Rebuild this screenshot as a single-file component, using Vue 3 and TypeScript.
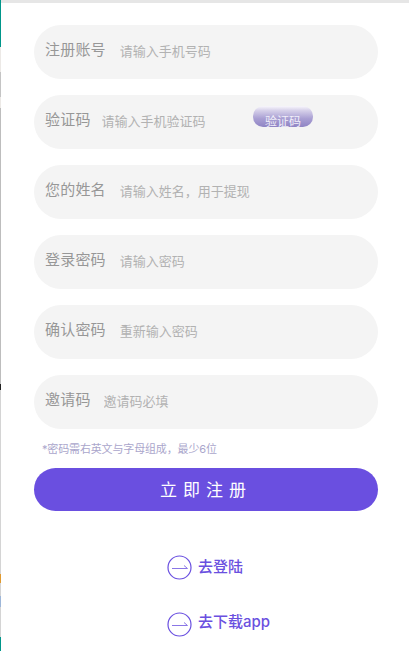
<script setup lang="ts">
interface Field {
  label: string
  placeholder: string
  gap: number
  code?: boolean
}
const fields: Field[] = [
  { label: '注册账号', placeholder: '请输入手机号码', gap: 14 },
  { label: '验证码', placeholder: '请输入手机验证码', gap: 11, code: true },
  { label: '您的姓名', placeholder: '请输入姓名，用于提现', gap: 14 },
  { label: '登录密码', placeholder: '请输入密码', gap: 14 },
  { label: '确认密码', placeholder: '重新输入密码', gap: 14 },
  { label: '邀请码', placeholder: '邀请码必填', gap: 13 },
]
const links = ['去登陆', '去下载app']
</script>

<template>
  <div class="page">
    <div class="top-edge"></div>
    <div class="left-edge"></div>
    <form class="form" @submit.prevent>
      <label v-for="f in fields" :key="f.label" class="field">
        <span class="label">{{ f.label }}</span>
        <input class="input" :placeholder="f.placeholder" :style="{ marginLeft: f.gap + 'px' }" />
        <button v-if="f.code" type="button" class="code-btn">验证码</button>
      </label>
      <p class="hint">*密码需右英文与字母组成，最少6位</p>
      <button type="submit" class="submit">立即注册</button>
    </form>
    <nav class="links">
      <a v-for="l in links" :key="l" class="link">
        <svg class="arrow" width="25" height="25" viewBox="0 0 25 25" fill="none">
          <circle cx="12.5" cy="12.5" r="11.5" stroke="#6a50e0" stroke-width="1.2" />
          <path d="M5 13.5H20.5M17 10.5L20.5 13.5" stroke="#8a76e6" stroke-width="1" />
        </svg>
        <span class="link-text">{{ l }}</span>
      </a>
    </nav>
  </div>
</template>

<style>
html, body { margin: 0; background: #fff; }
</style>

<style scoped>
.page {
  position: relative;
  width: 409px;
  height: 651px;
  overflow: hidden;
  background: #fff;
  font-family: Inter, "Noto Sans CJK SC", sans-serif;
}
.top-edge {
  position: absolute;
  top: 0;
  left: 0;
  right: 0;
  height: 3px;
  background: #e6e6e6;
}
.left-edge {
  position: absolute;
  top: 0;
  left: 0;
  width: 1px;
  height: 651px;
  background: linear-gradient(to bottom,
    #00968a 0 47px, #ece9e6 47px 72px, #c4c4c4 72px 97px, #ece9e6 97px 108px,
    #bdbdbd 108px 384px, #222 384px 390px, #d4d4d4 390px 574px, #e09a30 574px 583px,
    #d4d4d4 583px 596px, #9db6d8 596px 607px, #d4d4d4 607px 637px, #00968a 637px 651px);
}
.form {
  display: flex;
  flex-direction: column;
  gap: 16px;
  padding: 25px 31px 0 34px;
}
.field {
  display: flex;
  align-items: center;
  height: 54px;
  padding-left: 11px;
  border-radius: 27px;
  background: #f4f4f4;
  position: relative;
}
.label {
  flex: none;
  font-size: 15px;
  line-height: 20px;
  letter-spacing: 0.2px;
  color: #979797;
  position: relative;
  top: -2px;
}
.input {
  flex: 1;
  min-width: 0;
  height: 20px;
  padding: 0;
  border: 0;
  outline: 0;
  background: transparent;
  font: inherit;
  font-size: 13px;
  position: relative;
  top: -1px;
}
.input::placeholder {
  color: #b2b2b2;
  opacity: 1;
}
.code-btn {
  flex: none;
  width: 60px;
  height: 21px;
  margin: -12px 65px 0 0;
  padding: 8px 0 0;
  border: 0;
  border-radius: 10px;
  background: linear-gradient(to bottom, #f8f7fc 0, #d5cfe9 22%, #a99fd3 60%, #8f84c4 100%);
  color: #f1eff9;
  font: inherit;
  font-size: 12px;
  line-height: 16px;
  overflow: hidden;
}
.hint {
  margin: -4px 0 0 8px;
  font-size: 11px;
  line-height: 16px;
  letter-spacing: -0.15px;
  color: #aaa6cb;
}
.submit {
  height: 43px;
  margin-top: -5px;
  border: 0;
  border-radius: 22px;
  background: #6a4fe0;
  color: #fff;
  font: inherit;
  font-size: 17px;
  letter-spacing: 6px;
  padding: 0 0 2px;
}
.links {
  display: flex;
  flex-direction: column;
  align-items: flex-start;
  gap: 32px;
  padding: 44px 0 0 167px;
}
.link {
  display: flex;
  align-items: center;
  gap: 6px;
  font-size: 15px;
  font-weight: 500;
  line-height: 25px;
  color: #6a50e0;
}
.link-text {
  position: relative;
  top: -1px;
}
.link:last-child .link-text {
  top: -3px;
}
.arrow {
  flex: none;
}
</style>
